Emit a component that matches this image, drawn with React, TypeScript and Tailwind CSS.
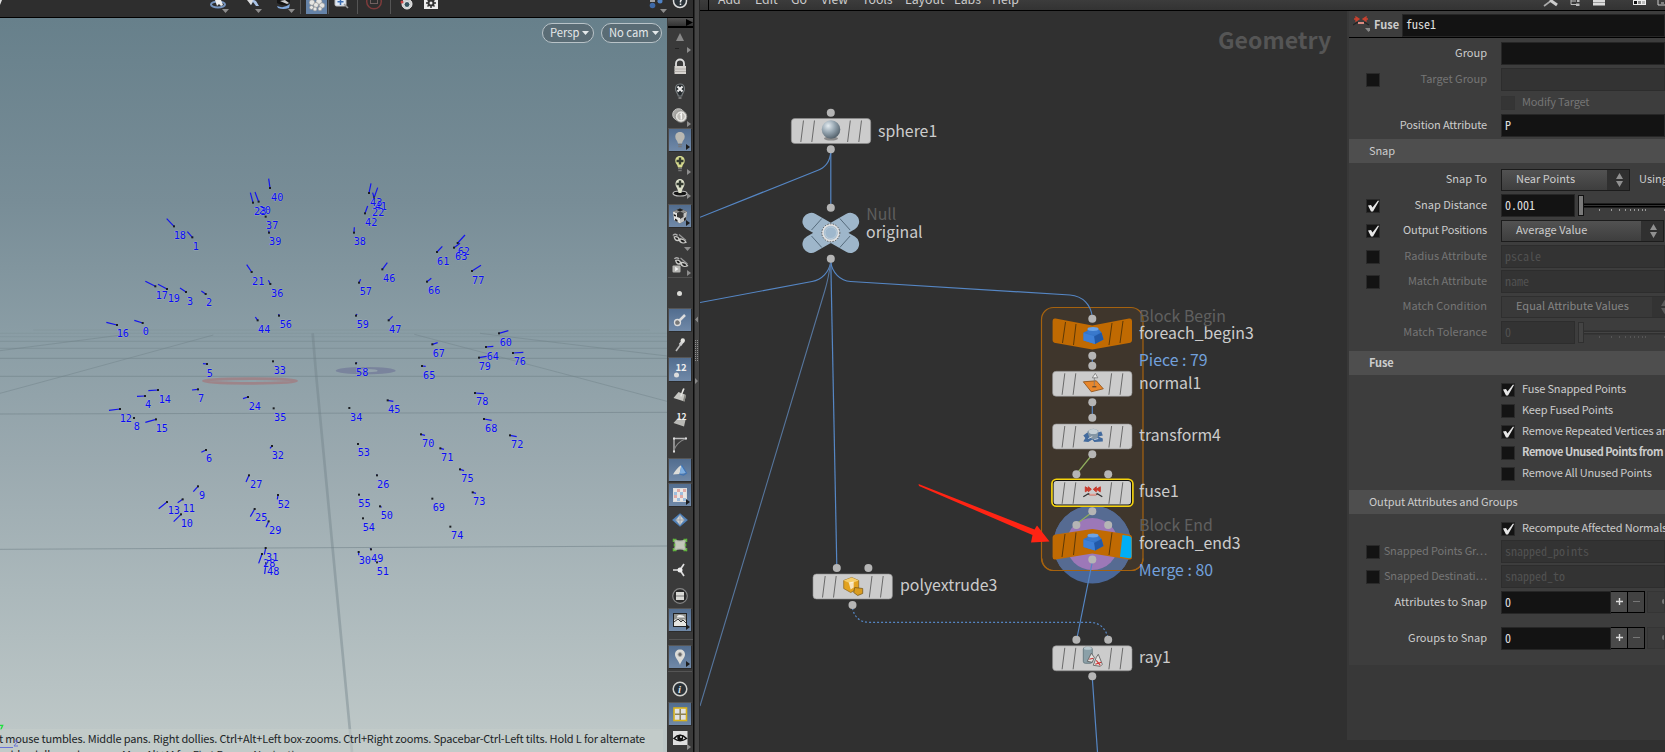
import type { ReactNode } from "react";

const UI = "font-['Noto_Sans_CJK_SC','Noto_Sans',sans-serif]";
const MONO = "font-['Noto_Sans_Mono_CJK_SC','DejaVu_Sans_Mono',monospace]";

/* ---------- 3D viewport ---------- */

type Pt = [string, number, number, number, number, number?, number?];

// label, label x, label centre y, point x, point y, normal tip x, normal tip y
const POINTS: Pt[] = [
  ["40", 815, 593, 810, 564, 806, 536],
  ["20", 778, 632, 776, 605, 765, 576],
  ["23", 764, 635, 759, 608, 751, 578],
  ["37", 800, 677, 797, 650],
  ["39", 809, 725, 807, 698, 806, 692],
  ["18", 523, 707, 522, 679, 500, 656],
  ["1", 580, 740, 577, 712, 562, 695],
  ["21", 758, 845, 755, 816, 740, 794],
  ["36", 815, 881, 811, 852, 805, 841],
  ["17", 469, 887, 466, 859, 436, 844],
  ["19", 505, 895, 501, 867, 474, 853],
  ["3", 563, 905, 558, 876, 540, 864],
  ["2", 620, 908, 617, 882, 604, 873],
  ["16", 352, 1000, 351, 975, 319, 967],
  ["0", 430, 995, 428, 969, 403, 961],
  ["44", 776, 989, 773, 961, 766, 951],
  ["56", 841, 974, 837, 947, 836, 942],
  ["59", 1072, 973, 1068, 947, 1071, 942],
  ["47", 1169, 988, 1166, 961, 1178, 949],
  ["5", 622, 1120, 621, 1092, 609, 1091],
  ["33", 823, 1112, 819, 1084],
  ["58", 1070, 1118, 1068, 1090, 1071, 1087],
  ["41", 1126, 620, 1122, 594, 1133, 563],
  ["43", 1112, 608, 1107, 579, 1113, 550],
  ["22", 1118, 638, 1122, 593, 1118, 578],
  ["42", 1097, 668, 1095, 640, 1103, 618],
  ["38", 1063, 725, 1062, 698, 1063, 682],
  ["46", 1151, 835, 1147, 808, 1162, 788],
  ["57", 1081, 874, 1077, 848, 1082, 838],
  ["61", 1313, 784, 1311, 756, 1327, 739],
  ["62", 1375, 755, 1373, 729, 1395, 705],
  ["63", 1367, 769, 1362, 743, 1380, 730],
  ["77", 1418, 841, 1416, 813, 1443, 796],
  ["66", 1286, 872, 1281, 845, 1294, 835],
  ["67", 1300, 1060, 1297, 1033, 1313, 1028],
  ["60", 1501, 1028, 1497, 1000, 1525, 992],
  ["64", 1462, 1070, 1458, 1041, 1480, 1039],
  ["76", 1543, 1085, 1539, 1059, 1570, 1057],
  ["79", 1438, 1100, 1437, 1073, 1460, 1069],
  ["65", 1271, 1126, 1266, 1098, 1277, 1099],
  ["14", 478, 1199, 474, 1170, 445, 1172],
  ["4", 437, 1214, 435, 1188, 411, 1189],
  ["7", 596, 1196, 594, 1168, 576, 1170],
  ["24", 748, 1220, 744, 1191, 729, 1196],
  ["12", 361, 1256, 360, 1227, 327, 1231],
  ["8", 403, 1280, 402, 1254],
  ["15", 469, 1286, 468, 1258, 436, 1267],
  ["35", 824, 1253, 821, 1225],
  ["34", 1052, 1253, 1048, 1224],
  ["45", 1166, 1229, 1163, 1201, 1180, 1204],
  ["6", 620, 1376, 618, 1350, 604, 1357],
  ["32", 817, 1367, 816, 1338, 810, 1345],
  ["53", 1075, 1358, 1074, 1332],
  ["27", 752, 1454, 747, 1426, 738, 1446],
  ["9", 599, 1487, 594, 1459, 580, 1475],
  ["26", 1133, 1454, 1131, 1426, 1129, 1424],
  ["52", 835, 1514, 834, 1485, 832, 1498],
  ["55", 1077, 1510, 1077, 1484],
  ["50", 1144, 1547, 1140, 1519, 1145, 1522],
  ["13", 505, 1532, 501, 1506, 476, 1526],
  ["11", 550, 1526, 548, 1498, 533, 1508],
  ["10", 544, 1570, 543, 1543, 521, 1565],
  ["25", 767, 1553, 764, 1527, 751, 1550],
  ["29", 809, 1592, 806, 1564, 798, 1582],
  ["54", 1090, 1583, 1089, 1555],
  ["28", 791, 1691, 786, 1662, 776, 1690],
  ["31", 800, 1673, 797, 1644, 793, 1664],
  ["48", 803, 1715, 798, 1690, 794, 1722],
  ["30", 1078, 1681, 1076, 1656, 1076, 1666],
  ["49", 1115, 1675, 1113, 1648, 1110, 1645],
  ["51", 1132, 1715, 1131, 1687],
  ["78", 1430, 1205, 1425, 1179, 1452, 1181],
  ["68", 1457, 1286, 1452, 1257, 1475, 1261],
  ["72", 1535, 1334, 1530, 1306, 1550, 1310],
  ["70", 1268, 1331, 1263, 1303, 1275, 1306],
  ["71", 1325, 1373, 1321, 1345, 1332, 1348],
  ["75", 1386, 1436, 1380, 1408, 1392, 1412],
  ["73", 1421, 1505, 1418, 1477, 1428, 1480],
  ["69", 1300, 1523, 1297, 1496],
  ["74", 1355, 1607, 1351, 1580],
];

function CameraPill({ label, className }: { label: string; className: string }) {
  return (
    <div className={`flex h-[20px] items-center rounded-full border border-[#b9c3c8] bg-[#5a6c75] pl-[7px] text-[11.2px] leading-none text-[#e4e8ea] ${className}`}>
      <span className="-mt-[1px]">{label}</span>
      <svg className="ml-[3px]" width="7" height="4"><path d="M0 0H7L3.500 4Z" fill="#e4e8ea" /></svg>
    </div>
  );
}

function Viewport() {
  return (
    <div className="relative h-full w-[667px] shrink-0 overflow-hidden bg-[linear-gradient(#67808b_0%,#788d97_25%,#8a9da5_43%,#9aa9af_60%,#abb8bb_78%,#bdc7c7_97%)]">
      <svg className="block" width="667" height="734" viewBox="0 54 2001 2202">
        <g stroke="#6f8087" strokeOpacity="0.55" strokeWidth="3" fill="none">
          <path d="M0 1075H2001M0 1129H2001M0 1242L2001 1237M0 1648L2001 1638" />
          <path d="M0 1045H2001M0 1024H2001" strokeOpacity="0.4" />
          <path d="M0 1010H2001M0 1000H2001M100 990H1950" strokeOpacity="0.2" />
          <path d="M0 1180L203 1125L640 1005M0 1052L380 1003M1243 1003L1705 1125L2001 1204M1440 1000L2001 1068" strokeOpacity="0.45" />
          <path d="M938 1000L949 1131L1056 2256" strokeWidth="8" strokeOpacity="0.42" />
        </g>
        <ellipse cx="750" cy="1143" rx="140" ry="7" fill="none" stroke="#a07f84" strokeWidth="8" strokeOpacity="0.85" />
        <ellipse cx="1097" cy="1112" rx="90" ry="11" fill="#6f7496" fillOpacity="0.65" />
        <ellipse cx="1105" cy="1112" rx="28" ry="5" fill="#93a2ab" />
        {POINTS.map(([label, , , px, py, vx, vy]) => (
          <g key={`v${label}${px}`}>
            {vx !== undefined && <path d={`M${px} ${py}L${vx} ${vy}`} stroke="#1414ee" strokeWidth="3.6" />}
            <rect x={px - 3} y={py - 3} width="6" height="6" fill="#1c1e22" />
          </g>
        ))}
        <g className="font-['DejaVu_Sans_Mono',monospace]" fontSize="30.600" fill="#0a0af5" stroke="#b9c6d8" strokeWidth="2.500" strokeOpacity="0.45" paintOrder="stroke">
          {POINTS.map(([label, lx, ly, px]) => (
            <text key={`t${label}${px}`} x={lx - 2} y={ly + 11}>{label}</text>
          ))}
        </g>
        <path d="M0 2176L8 2176L2 2190" stroke="#20e040" strokeWidth="4" fill="none" />
      </svg>
      <div className="absolute top-[5px] right-[5px] flex gap-[7px]">
        <CameraPill label="Persp" className="w-[52px]" />
        <CameraPill label="No cam" className="w-[61px]" />
      </div>
      <div className="absolute bottom-0 left-0 h-[23px] w-[663px] overflow-hidden bg-[#c4cdca]/60">
        <div className="-ml-[24px] w-[800px] pt-px text-[11px] leading-[16px] tracking-[-0.17px] text-[#202426]">
          <p className="pl-[8px] whitespace-nowrap">Left mouse tumbles. Middle pans. Right dollies. Ctrl+Alt+Left box-zooms. Ctrl+Right zooms. Spacebar-Ctrl-Left tilts. Hold L for alternate</p>
          <p className="pl-[14px] whitespace-pre">{"tumble, dolly, and zoom.    M or Alt+M for First Person Navigation."}</p>
        </div>
      </div>
      <svg className="absolute bottom-0 left-0" width="24" height="12"><path d="M0 7.500H13" stroke="#6872d8" strokeWidth="1" /><path d="M14 1H18L14 6H18" stroke="#6872d8" fill="none" /></svg>
    </div>
  );
}

/* ---------- viewport icons (22 x 22) ---------- */

const Plus = ({ y }: { y: number }) => <path d={`M7.500 ${y}H14.500M11 ${y - 3.5}V${y + 3.5}`} stroke="#333a30" strokeWidth="2.400" />;
const Bulb = ({ fill, children }: { fill: string; children?: ReactNode }) => (
  <>
    <path d="M11 3C7.500 3 6.300 5.500 6.300 7.800C6.300 10.800 8.500 11.500 9 14.500H13C13.500 11.500 15.700 10.800 15.700 7.800C15.700 5.500 14.500 3 11 3Z" fill={fill} />
    <path d="M9 15.700H13M9.300 17.700H12.700" stroke="#777" strokeWidth="1.300" />
    {children}
  </>
);
const Glasses = () => (
  <>
    <path d="M4 6.500C5 4.500 7.500 5 8.500 6.500" stroke="#aaa" strokeWidth="1.500" fill="none" />
    <path d="M4.500 7.500C7 6 10 7.500 10.500 9.500C12 8.500 16 10 18 13.500C14 15.500 10.500 14 10 12C7 13 5 11 4.500 7.500Z" fill="#c9c9c6" />
    <path d="M6 8.500C7.500 8 9 9 9.300 10.500C7.500 11 6.500 10 6 8.500ZM11.500 11C13 10.500 15 11.500 16 13C14 14 12 13 11.500 11Z" fill="#1c1c1c" />
    <path d="M10 5.500L17 11.500" stroke="#999" strokeWidth="1.200" />
  </>
);

const ICONS: Record<string, ReactNode> = {
  up: <><path d="M11 3L15 11H7Z" fill="#888" /><path d="M6 18.500H10" stroke="#222" /></>,
  lock: <><path d="M7 10V7.500A4 4 0 0 1 15 7.500V10" stroke="#ddd" strokeWidth="1.800" fill="none" /><rect x="5.500" y="10" width="11.500" height="8" fill="#d6d3cf" /><path d="M5.500 13H17M5.500 15.500H17" stroke="#a9a6a2" strokeWidth=".8" /></>,
  bulbx: <><path d="M11 3C8 3 6.500 5.300 6.500 8C6.500 11 9 12 9.300 15H12.700C13 12 15.500 11 15.500 8C15.500 5.300 14 3 11 3Z" fill="#262b2e" stroke="#777c7e" strokeWidth="1.200" /><path d="M8.500 5.500L13.500 10.500M13.500 5.500L8.500 10.500" stroke="#eee" strokeWidth="2" /><path d="M9.500 17H12.500" stroke="#777" strokeWidth="2" /></>,
  disc: <><circle cx="9.500" cy="9.500" r="5.800" fill="#a9a8a5" stroke="#c9c9c6" /><circle cx="12" cy="11.500" r="5.800" fill="#d3d1cc" stroke="#8e8e8b" strokeWidth=".8" /><circle cx="12" cy="11.500" r="4.300" fill="#bfbdb8" stroke="#efefec" strokeWidth="1" /><path d="M11 10L12.300 9V14.500" stroke="#f4f4f2" strokeWidth="1.400" fill="none" /></>,
  bulb: <Bulb fill="#b9b8b2" />,
  bulbp: <Bulb fill="#d7db8f"><Plus y={8} /></Bulb>,
  bulbg: <><ellipse cx="11" cy="16.500" rx="7" ry="2.500" fill="#151515" stroke="#bbb" strokeWidth="1.200" /><path d="M11 2C8 2 6.500 4.500 6.500 7C6.500 10 9 11 9.500 16H12.500C13 11 15.500 10 15.500 7C15.500 4.500 14 2 11 2Z" fill="#dfe2cc" /><Plus y={7} /></>,
  cube: <><path d="M11 3.500L18 6.500L17 15L11 18.500L5 15L4 6.500Z" fill="#3a3a3a" /><path d="M4 6.500L8 8V12L11 13V18.500L5 15Z" fill="#e4e4e2" /><path d="M11 18.500V14L14.500 12V8.500L18 6.500L17 15Z" fill="#c4c4c2" /><path d="M4 6.500L7.500 5L11 6.500L8 8ZM11 3.500L14.500 5L18 6.500L14.500 8L11 6.500L7.500 5Z" fill="#8f8f8d" /><path d="M4.700 9L7 10V11.500L5 11ZM6 13.500L8.500 15V17L6 15.500ZM15 13.500L17 12L16.800 15L15 16ZM11 3.500L14.500 5L11 6.500L7.500 5Z" fill="#1d1d1d" /></>,
  glasses: <Glasses />,
  glassp: <><g transform="translate(1.500 -1.500)"><Glasses /></g><rect x="3.500" y="11.500" width="8" height="7" rx="1" fill="#b5b5b2" /><path d="M6.200 12.800L9.500 15L6.200 17.200Z" fill="#f4f4f4" /></>,
  dot: <circle cx="10.500" cy="11.500" r="2.500" fill="#dcdcd8" />,
  dotline: <><circle cx="8.500" cy="13.500" r="3" fill="#777" stroke="#ddd" strokeWidth="1.300" /><path d="M10 12L16 6" stroke="#ddd" strokeWidth="2.500" /></>,
  pin: <><path d="M7 17L13.500 8" stroke="#bbb" strokeWidth="1.600" /><path d="M11 11L14 7" stroke="#ccc" strokeWidth="3" /><circle cx="13.800" cy="6.500" r="2.200" fill="#e4e4e0" /></>,
  num: <><circle cx="7.500" cy="16" r="2.500" fill="#ddd" /><text x="6.500" y="12" fontSize="9.500" fontWeight="700" fill="#eee">12</text></>,
  prism: <><path d="M4.500 14L9.500 8L17 11L15.500 17.500Z" fill="#c6c6c2" /><path d="M17 11L15.500 17.500L14 16.500L15.500 11Z" fill="#85857f" /><path d="M11.800 12.500L14.500 5M13.500 8L15 4.500" stroke="#e4e4e0" strokeWidth="1.500" fill="none" /></>,
  prismn: <><path d="M4.500 14L9 9L16.500 11L15 17.500Z" fill="#b9b9b5" /><text x="7.500" y="11" fontSize="8.500" fontWeight="700" fill="#eee">12</text></>,
  curve: <><path d="M5 4.500H17M5 4.500V18" stroke="#bbb" strokeWidth="1.300" /><path d="M5 16C7 11 11 7 16 5" stroke="#888" strokeWidth="1.100" fill="none" /><path d="M4 3.500h2v2h-2zM16 3.500h2v2h-2zM4 16.500h2v2h-2z" fill="#ddd" /></>,
  face: <><path d="M4 15.500C6 12 9 8 12.500 6L10.500 15Z" fill="#dcdcd8" /><path d="M12.500 6L17.500 14L10.500 15Z" fill="#7eaee0" /><path d="M12.500 6L17.500 14L14.500 16L10.500 15" fill="none" stroke="#3f73b3" strokeWidth="1.200" /></>,
  checker: <><rect x="4.500" y="4.500" width="13" height="13" fill="#e9e6e4" stroke="#ddd" /><path d="M8 5h3v3h-3zM14 5h3v3h-3zM5 11h3v3h-3zM11 11h3v3h-3z" fill="#dfaaa6" /><path d="M5 8h3v3h-3zM11 8h3v3h-3zM8 14h3v3h-3zM14 14h3v3h-3z" fill="#9dbede" /></>,
  diamond: <><path d="M11 5L18 11L11 17L4 11Z" fill="#6d8fb5" stroke="#4c7fb9" strokeWidth="1.200" /><path d="M11 6L15 11L11 16L7 11Z" fill="#cfd3d4" /><path d="M11 6V16M7 11H15" stroke="#999" strokeWidth=".8" /></>,
  green: <><path d="M5.500 6Q11 8.500 16.500 6Q14.500 11 16.500 16Q11 13.500 5.500 16Q7.500 11 5.500 6Z" fill="#c3c8bb" stroke="#b9beb2" strokeWidth="1.400" /><path d="M4.500 8V5.500H7.500M14.500 5.500H17.500V8M17.500 14V16.500H14.500M7.500 16.500H4.500V14M5.500 9.500V12.500M16.500 9.500V12.500" stroke="#62b53f" strokeWidth="1.500" fill="none" /></>,
  axes: <><path d="M11 11H4M11 11L15 5M11 11L15 17" stroke="#ddd" strokeWidth="1.700" /><circle cx="11" cy="11" r="2.500" fill="#eee" /></>,
  circle: <><circle cx="11" cy="11" r="7.300" fill="#2b2b2b" stroke="#858585" strokeWidth="1.200" /><rect x="7" y="7" width="8" height="8" fill="#d9d9d5" /><path d="M7 11H15" stroke="#8a8a8a" strokeWidth="1.200" /></>,
  image: <><rect x="4.500" y="4.500" width="13" height="13" fill="#8e908c" stroke="#222" /><path d="M5 11L9 9L12 12L15 10L17 12V17H5Z" fill="#e6e6e2" /><path d="M5 13L9 10L12 13L14 11L17 14" stroke="#333" fill="none" /><path d="M8 7.500C9 5.500 14 5.500 16 8.500H8Z" fill="#eee" /></>,
  marker: <><path d="M11 3.500C8 3.500 6 5.500 6 8.500C6 12 10 15 11 19C12 15 16 12 16 8.500C16 5.500 14 3.500 11 3.500Z" fill="#dcdcd8" /><circle cx="11" cy="8.500" r="2" fill="#666" stroke="#aaa" /></>,
  info: <><circle cx="11" cy="10" r="6.800" fill="#2a3238" stroke="#d2d2ce" strokeWidth="1.500" /><text x="9" y="14" fontSize="11" fontStyle="italic" fontWeight="700" fill="#ddd" fontFamily="Liberation Serif, serif">i</text></>,
  quad: <><rect x="5" y="5" width="12.500" height="12.500" fill="#e2e2e2" stroke="#d7b21c" strokeWidth="1.600" /><path d="M11.200 6V17M6 11.200H17" stroke="#8d8252" strokeWidth="1.500" /></>,
  eye: <><rect x="4" y="3" width="14.500" height="14" fill="#dedede" /><path d="M5 10.500Q11 4 17.500 10.500Q11 15 5 10.500Z" fill="#f4f4f4" stroke="#111" strokeWidth="1.500" /><circle cx="11.200" cy="9.800" r="3" fill="#111" /><circle cx="12" cy="9" r=".9" fill="#fff" /></>,
};

type Tool = { icon: string; cls: string; on?: boolean; arrow?: "right" | "down"; line?: boolean };

const TOOLS: Tool[] = [
  { icon: "up", cls: "h-[26px]", arrow: "right" },
  { icon: "lock", cls: "h-[25px]" },
  { icon: "bulbx", cls: "h-[25px]" },
  { icon: "disc", cls: "h-[24px]", arrow: "right" },
  { icon: "bulb", cls: "h-[24px]", on: true, arrow: "right" },
  { icon: "bulbp", cls: "h-[24px]", arrow: "right" },
  { icon: "bulbg", cls: "h-[24px]", arrow: "right" },
  { icon: "cube", cls: "mt-[4px] h-[24px]", on: true, arrow: "right" },
  { icon: "glasses", cls: "h-[24px]", arrow: "down" },
  { icon: "glassp", cls: "h-[25px]", arrow: "right" },
  { icon: "dot", cls: "h-[31px] border-t border-[#505050]" },
  { icon: "dotline", cls: "h-[24px]", on: true },
  { icon: "pin", cls: "h-[25px]" },
  { icon: "num", cls: "h-[25px]", on: true },
  { icon: "prism", cls: "h-[25px]" },
  { icon: "prismn", cls: "h-[25px]" },
  { icon: "curve", cls: "h-[26px]" },
  { icon: "face", cls: "mb-px h-[24px]", on: true },
  { icon: "checker", cls: "mb-px h-[24px]", on: true, arrow: "right" },
  { icon: "diamond", cls: "h-[24px]" },
  { icon: "green", cls: "h-[25px]" },
  { icon: "axes", cls: "h-[26px]" },
  { icon: "circle", cls: "h-[25px]" },
  { icon: "image", cls: "h-[24px]", on: true, arrow: "right" },
  { icon: "marker", cls: "mt-[13px] h-[24px]", on: true, arrow: "right", line: true },
  { icon: "info", cls: "mt-[9px] h-[24px]", line: true },
  { icon: "quad", cls: "h-[24px]", on: true },
  { icon: "eye", cls: "h-[25px]", arrow: "right" },
];

function ToolStrip() {
  return (
    <div className="flex w-[26px] shrink-0 flex-col bg-[#3a3a3a] pl-px">
      <div className="flex h-[10px] shrink-0 items-center justify-end border-b-2 border-black bg-[linear-gradient(#555,#333)]">
        <svg width="7" height="7"><path d="M0 0L7 3.500L0 7Z" fill="#000" /></svg>
      </div>
      {TOOLS.map((t) => (
        <div key={t.icon} className={`relative flex w-[24px] shrink-0 items-center justify-center ${t.cls} ${t.on ? "border border-[#2c2c2c] border-t-[#565656] border-l-[#4c4c4c] bg-[linear-gradient(#526d8f,#7089a8)]" : ""}`}>
          {t.line && <div className="absolute -top-[7px] left-0 h-px w-[24px] bg-[#555]" />}
          <svg className="shrink-0" width="22" height="22">{ICONS[t.icon]}</svg>
          {t.arrow === "right" && <svg className="absolute right-[1px] bottom-[1px]" width="4" height="6"><path d="M0 0L4 3L0 6Z" fill={t.on ? "#1c1c1c" : "#8d8d8d"} /></svg>}
          {t.arrow === "down" && <svg className="absolute right-[1px] bottom-[1px]" width="7" height="4"><path d="M0 0H7L3.500 4Z" fill="#8d8d8d" /></svg>}
        </div>
      ))}
    </div>
  );
}

function TopBar() {
  return (
    <div className="h-[18px] shrink-0 border-b border-black bg-[#2e2e2e]">
      <svg className="block" width="693" height="17">
        <path d="M0 5L2 0H0Z" fill="#ddd" />
        <ellipse cx="218" cy="4.500" rx="7" ry="3" fill="none" stroke="#7795bf" strokeWidth="2" />
        <path d="M215 0L217 6L219 4L221 6L223 5L221 0Z" fill="#eee" />
        <path d="M248 0L251 5L253 2L256 6L259 6L256 1L254 0Z" fill="#a9c3e6" /><path d="M247 0L251 5L253 0Z" fill="#ddd" />
        <path d="M277 6Q284 9 290 4L289 8Q283 10 278 8Z" fill="#7fa7dc" /><path d="M277 0H290V2L287 5Q282 6 277 3Z" fill="#151515" /><path d="M280 1L285 0L289 3L287 4Z" fill="#ccc" />
        <path d="M222 9H229L225.500 13ZM255 9H262L258.500 13ZM288 9H295L291.500 13ZM660 9H667L663.500 13Z" fill="#8d8d8d" />
        <path d="M300.500 0V14M328.500 0V14M357.500 0V14M390.500 0V14" stroke="#555" />
        <rect x="306" y="0" width="21" height="14" fill="#6583a8" />
        <g fill="#e5e5e2" stroke="#8d8d8d" strokeWidth=".6"><circle cx="312" cy="2.500" r="2.800" /><circle cx="319" cy="1.500" r="3" /><circle cx="311.500" cy="7.500" r="2" /><circle cx="316" cy="5" r="2.500" /><circle cx="322" cy="5.500" r="2.700" /><circle cx="315" cy="9" r="2" /><circle cx="320" cy="8.800" r="2" /></g>
        <rect x="335" y="-4" width="11" height="10" rx="1.500" fill="#dfe9f5" stroke="#bbb" /><path d="M340.500 -1V5M337.500 1.800H343.500" stroke="#3c6fb4" strokeWidth="1.500" /><path d="M344 4L348 8" stroke="#999" strokeWidth="1.600" />
        <circle cx="374" cy="1.500" r="7.300" fill="none" stroke="#7c3b3b" strokeWidth="1.500" /><rect x="370.500" y="-1" width="7" height="4.500" fill="none" stroke="#71605f" />
        <circle cx="407" cy="4" r="5" fill="#ccc" stroke="#eee" /><circle cx="407" cy="4.500" r="3" fill="#35535e" stroke="#eee" /><circle cx="402" cy="2" r="1.500" fill="#c44" />
        <rect x="424" y="-3" width="14" height="12" fill="#eee" /><circle cx="431" cy="3" r="3.500" fill="#333" /><path d="M431 -2V8M426 3H436M427.500 -.5L434.500 6.500M434.500 -.5L427.500 6.500" stroke="#333" strokeWidth="1.500" /><circle cx="431" cy="3" r="1.500" fill="#eee" />
        <path d="M650 1H655M658 2L661 0" stroke="#ccc" strokeWidth="1.500" /><circle cx="652.500" cy="5.500" r="2.800" fill="#3d69a8" /><circle cx="660" cy="1" r="2.500" fill="#4f82c4" />
        <circle cx="680" cy="1" r="6.500" fill="#2a3238" stroke="#ddd" strokeWidth="1.500" /><path d="M678 -1Q678 -3.500 680.500 -3.500Q683 -2 680.500 1V2.500M680.500 3.500V5" stroke="#eee" strokeWidth="1.500" fill="none" />
      </svg>
    </div>
  );
}

/* ---------- network editor ---------- */

function Pin({ x, y }: { x: number; y: number }) {
  return <circle cx={x} cy={y} r="4" fill="#b5b5b5" />;
}

function Slots({ x, y, stroke = "#6a6a6a" }: { x: number; y: number; stroke?: string }) {
  return <path transform={`translate(${x} ${y})`} d="M12.200 2L9.500 23.500M23.200 2L20.500 23.500M59 2L56.300 23.500M70.200 2L67.500 23.500" stroke={stroke} strokeWidth="1" />;
}

function NodeBody({ x, y, children }: { x: number; y: number; children?: ReactNode }) {
  return (
    <g>
      <rect x={x} y={y} width="79.400" height="25" rx="3.500" fill="#cccccc" stroke="#8f8f8f" strokeWidth=".6" />
      <Slots x={x} y={y} />
      <g transform={`translate(${x + 39.7} ${y + 12.5})`}>{children}</g>
    </g>
  );
}

const Brick = () => (
  <>
    <path d="M-9.500 -3L-5 -5L6 -6L8.500 -3L10.500 4L2 8.500L-9.500 5Z" fill="#3474c8" />
    <path d="M1 1L8.500 -3L10.500 4L2 8.500Z" fill="#2259a8" />
    <path d="M-9.500 -2.500L1 0.500L2 8.500L-9.500 5Z" fill="#3f80d6" />
    <path d="M-5.500 -6.500Q0 -9.500 5.500 -6.500V-2Q0 0.500 -5.500 -2Z" fill="#3a79cc" /><ellipse cx="0" cy="-6.500" rx="5.500" ry="1.900" fill="#6ba3e6" />
  </>
);

const LABELS: [string, number, number, string][] = [
  ["sphere1", 878, 136.500, "#cccccc"],
  ["Null", 866.300, 219.800, "#5e5e5e"],
  ["original", 866.100, 237.500, "#cccccc"],
  ["polyextrude3", 900, 591.400, "#cccccc"],
  ["Block Begin", 1139, 321.800, "#606060"],
  ["foreach_begin3", 1139, 339.400, "#cccccc"],
  ["Piece : 79", 1138.800, 366.200, "#72a0dc"],
  ["normal1", 1139, 389.400, "#cccccc"],
  ["transform4", 1139, 441.400, "#cccccc"],
  ["fuse1", 1139, 497.400, "#cccccc"],
  ["Block End", 1139, 531, "#606060"],
  ["foreach_end3", 1139, 549.400, "#cccccc"],
  ["Merge : 80", 1138.800, 576.200, "#72a0dc"],
  ["ray1", 1139, 663.400, "#cccccc"],
];

function Network() {
  return (
    <svg className="block shrink-0 bg-[#303030]" width="647" height="741" viewBox="700 11 647 741">
      <text x="1218" y="49" fontSize="23.100" fontWeight="700" fill="#555555">Geometry</text>
      <rect x="1041.500" y="307.500" width="101.500" height="263" rx="12" fill="#3f362c" stroke="#a5620f" strokeWidth="1.200" />
      <circle cx="1092.300" cy="544.500" r="39" fill="#4a6798" />
      <path d="M1053.300 544.500A39 39 0 0 1 1131.300 544.500V570H1053.300Z" fill="#566b92" clipPath="url(#halo)" />
      <clipPath id="halo"><circle cx="1092.300" cy="544.500" r="39" /></clipPath>
      <circle cx="1092.300" cy="544" r="26" fill="#9c78b8" />
      <path d="M1042 558.500A12 12 0 0 0 1053.500 570.500H1131A12 12 0 0 0 1143 558.500" fill="none" stroke="#a5620f" strokeWidth="1.200" />
      <g stroke="#5586c4" strokeWidth="1.200" fill="none">
        <path d="M830.800 152C830 162 825 168 816.700 170.700L700 217.300" />
        <path d="M830.800 152V206" />
        <path d="M830.800 262C829 272 822 280 812 281.500L700 302.500" />
        <path d="M830.800 262C832 272 840 281 850.600 281.500L1070 295C1083 296 1091 305 1092.300 317" />
        <path d="M830.800 262L836.800 566" />
        <path d="M830.800 262C829 274 828 280 825 290L700 706" stroke="#56759c" strokeWidth="1.100" />
        <path d="M1092.300 357V365M1092.300 403V417M1092.300 562L1077 638M1092.300 678L1097.500 752" />
        <path d="M852.500 608C854 617 860 622.300 869 622.300H1090C1100 622.500 1106 629 1108 638" strokeDasharray="2 2" />
      </g>
      <path d="M1092.300 454.500L1076.500 474M1092.300 512L1076.500 524" stroke="#8fae5d" strokeWidth="1.200" />

      <NodeBody x={791.300} y={118.500}>
        <defs><radialGradient id="ball" cx=".35" cy=".3" r=".8"><stop offset="0" stopColor="#e4ecf1" /><stop offset=".45" stopColor="#96a6b1" /><stop offset="1" stopColor="#47545e" /></radialGradient></defs>
        <ellipse cx="0" cy="7.500" rx="7" ry="2" fill="#8a8a8a" /><circle cx="0" cy="-1.500" r="9.300" fill="url(#ball)" />
      </NodeBody>
      <Pin x={830.800} y={112.700} /><Pin x={830.800} y={149.300} />

      <path d="M811.200 221.600L850.400 244.200M850.400 221.600L811.200 244.200" stroke="#9eb6ca" strokeWidth="17.500" strokeLinecap="round" />
      <path d="M811.500 230L821.800 218.500M850.100 230L839.800 218.500M811.500 236L821.800 247.500M850.100 236L839.800 247.500" stroke="#566b7c" strokeWidth="1" />
      <circle cx="830.800" cy="232.800" r="8" fill="#a3bbcf" stroke="#e0e0e0" strokeWidth="2" /><circle cx="830.800" cy="232.800" r="9" fill="none" stroke="#555" strokeWidth="1" strokeDasharray="1.300 1.460" /><circle cx="830.800" cy="232.800" r="5.800" fill="#9fb8cd" stroke="#bfcfdb" strokeWidth=".8" />
      <Pin x={830.800} y={207.700} /><Pin x={830.800} y={258.700} />

      <NodeBody x={813} y={574}>
        <path d="M-9 -6L-1 -9L6 -6V2L-2 6L-9 2Z" fill="#e2a21f" stroke="#8b6419" strokeWidth=".7" /><path d="M-9 -6L-2 -3L6 -6L-1 -9Z" fill="#f4cd6b" /><path d="M-4 -4L1 -5V1L-2 3Z" fill="#fff" opacity=".7" /><path d="M2 1L10 2V7L5 9L1 6Z" fill="#d99c20" stroke="#6f5014" strokeWidth=".7" />
      </NodeBody>
      <Pin x={836.800} y={568} /><Pin x={868.400} y={568} /><Pin x={852.500} y={605} />

      <path d="M1055.600 318.500L1092.300 325.500L1129 318.500Q1132 318 1132 321.500V340Q1132 342.500 1129 343L1092.300 349.500L1055.600 343Q1052.600 342.500 1052.600 340V321.500Q1052.600 318 1055.600 318.500Z" fill="#c06a02" />
      <path d="M1065.500 322L1062.500 343M1076 324L1073.500 345M1112 323L1109 345M1123 321L1120 343" stroke="#5e3906" />
      <g transform="translate(1093 335.500)"><Brick /></g>
      <Pin x={1092.300} y={318.700} /><Pin x={1092.300} y={355.700} />

      <NodeBody x={1052.600} y={371.300}>
        <path d="M-9 -2L4 -3L11 5L-1 8Z" fill="#e8872c" stroke="#8c4c12" strokeWidth=".8" /><path d="M2 2V-6M0 -6L3 -10.500L5.500 -6Z" fill="#f0f0f0" stroke="#777" strokeWidth=".8" /><path d="M0 3H4" stroke="#333" />
      </NodeBody>
      <Pin x={1092.300} y={365.700} /><Pin x={1092.300} y={402.300} />

      <NodeBody x={1052.600} y={424}>
        <path d="M-9 -1L-5 -4L2 -3L9 -5L10.500 -1L6 0L10.500 2V5L2 5.500L0 3L-4 5.500L-9 5L-7 1.500Z" fill="#436b9e" />
        <path d="M-5 -5Q0 -10 6 -6L5.500 1L1 3L-3 1Z" fill="#8496a4" /><ellipse cx="1" cy="-5" rx="4.500" ry="2.600" fill="#c6d0d6" />
        <path d="M-4 2L0 0M2 3L6 2" stroke="#d6dce2" />
      </NodeBody>
      <Pin x={1092.300} y={417.700} /><Pin x={1092.300} y={454.300} />

      <NodeBody x={1052.600} y={480.300}>
        <path d="M-7 -6L-3 -3.500L-7 -1ZM-1 -3.500L-4 -6V-1ZM8 -6L4 -3.500L8 -1ZM1 -3.500L4 -6V-1Z" fill="#c93a2c" stroke="#c93a2c" /><path d="M-9 4L-4 1L-2 2H3L5 1L10 4" stroke="#333" strokeWidth="1.300" fill="none" /><path d="M-3 2H4" stroke="#e09a90" strokeWidth="2" />
      </NodeBody>
      <rect x="1053" y="480.500" width="78.600" height="24.500" rx="3.500" fill="none" stroke="#111" strokeWidth="1.200" />
      <rect x="1051.900" y="479.300" width="81" height="27" rx="4.500" fill="none" stroke="#f7d40c" strokeWidth="1.600" />
      <Pin x={1076.400} y={474.300} /><Pin x={1108.200} y={474.300} /><Pin x={1092.300} y={511.200} />

      <path d="M1055.600 534.500L1092.300 529L1129 534.500Q1132 535 1132 537.500V557Q1132 560 1129 559.400L1092.300 553.500L1055.600 559.400Q1052.600 560 1052.600 557V537.500Q1052.600 535 1055.600 534.500Z" fill="#c06a02" />
      <path d="M1122.500 535L1129 536Q1131.500 536.500 1131.500 538.500V556.500Q1131.500 558.500 1129 558.200L1120 556.800Z" fill="#00aef5" />
      <path d="M1065 534L1062 557M1076 532.500L1073.500 555M1112 532.500L1109 555" stroke="#5e3906" />
      <g transform="translate(1093 542)"><Brick /></g>
      <Pin x={1076.400} y={525} /><Pin x={1108.200} y={525} /><Pin x={1092.300} y={559.500} />

      <NodeBody x={1052.600} y={645.800}>
        <rect x="-9" y="-11" width="9" height="16" rx="2" fill="#8ba0a8" stroke="#5d7078" strokeWidth=".8" /><ellipse cx="-4.500" cy="-10" rx="4" ry="1.500" fill="#b9c9cf" /><path d="M-5 3L-1 -5L2 -1L0 4ZM1 7L4 -1L6 -4L10 6L8 8Z" fill="#e2e2e0" stroke="#555" strokeWidth=".8" /><path d="M-3 1L1 0M3 6L9 4M4 2L8 7" stroke="#c33" strokeWidth="1.100" />
      </NodeBody>
      <Pin x={1076.400} y={639.800} /><Pin x={1108.200} y={639.800} /><Pin x={1092.300} y={676.300} />

      {LABELS.map(([text, x, y, fill]) => (
        <text key={text} x={x} y={y} fontSize="15.850" fill={fill}>{text}</text>
      ))}
      <path d="M918.500 484L1034.500 529.500L1037 525.500L1049.500 541.500L1031 542.500L1032.500 535L919 486Z" fill="#ff2414" />
    </svg>
  );
}

/* ---------- parameter pane ---------- */

function Check({ on, dim, className = "" }: { on?: boolean; dim?: boolean; className?: string }) {
  return (
    <div className={`h-[14px] w-[14px] shrink-0 border ${dim ? "border-[#343434] bg-[#353535]" : "border-[#2a2a2a] bg-[#131313]"} ${className}`}>
      {on && <svg className="block" width="12" height="12"><path d="M1 5.500L4 5L5.500 7.500L11 0.500L12 1L6 11.500H4Z" fill="#e6e6e6" /></svg>}
    </div>
  );
}

function Row({ cls, label, dim, tight, check, children }: { cls: string; label?: string; dim?: boolean; tight?: boolean; check?: "on" | "off"; children?: ReactNode }) {
  return (
    <div className={`flex w-[316px] shrink-0 items-center ${cls}`}>
      <div className="flex w-[32px] shrink-0 justify-end">{check && <Check on={check === "on"} className="mr-[1px]" />}</div>
      <div className={`w-[106px] shrink-0 pb-[2px] text-right whitespace-nowrap ${dim ? "text-[#757575]" : "text-[#cccccc]"} ${tight ? "tracking-[-0.15px]" : ""}`}>{label}</div>
      <div className="ml-[14px] flex h-full min-w-0 flex-1 items-center overflow-hidden">{children}</div>
    </div>
  );
}

function Field({ value = "", dim, cls = "flex-1" }: { value?: string; dim?: boolean; cls?: string }) {
  return (
    <div className={`flex h-full items-center border pl-[3px] text-[12px] leading-none whitespace-nowrap ${MONO} ${dim ? "border-[#2d2d2d] bg-[#333333] text-[#515151]" : "border-[#262626] bg-[#131313] text-[#e0e0e0]"} ${cls}`}>
      <span className="-mt-[2px]">{value}</span>
    </div>
  );
}

function Select({ value, cls, dim }: { value: string; cls: string; dim?: boolean }) {
  return (
    <div className={`flex h-[22px] shrink-0 items-center border ${dim ? "border-[#2f2f2f] bg-[#393939] text-[#858585]" : "border-[#1c1c1c] bg-[linear-gradient(#525252,#3e3e3e)] text-[#cccccc]"} ${cls}`}>
      <span className="flex-1 pb-[2px] pl-[14px] whitespace-nowrap">{value}</span>
      <div className={`flex h-full w-[22px] items-center justify-center pl-[2px] ${dim ? "bg-[#333]" : "bg-[#303030]"}`}>
        <svg width="7" height="14"><path d="M3.500 0L7 6H0ZM3.500 14L0 8H7Z" fill={dim ? "#5a5a5a" : "#909090"} /></svg>
      </div>
    </div>
  );
}

function Slider({ dim }: { dim?: boolean }) {
  return (
    <svg className="ml-[3px] shrink-0" width="87" height="22">
      <path d="M5 10.500H87" stroke={dim ? "#303030" : "#000"} strokeWidth="4" />
      <path d="M5 10.500H87" stroke={dim ? "#444" : "#333"} strokeWidth="1" />
      <path d="M21.500 14v2M33.500 14v2M41.500 14v2M47.500 14v2M52.500 14v2M56.500 14v2M60.500 14v2M64.500 14v2M67.500 14v2M86.500 14v2" stroke={dim ? "#565656" : "#999"} />
      <rect x=".5" y=".5" width="5" height="20" fill={dim ? "#444" : "#7a7a7a"} stroke={dim ? "#303030" : "#111"} />
    </svg>
  );
}

function Toggle({ cls, label, on, dim, bold }: { cls: string; label: string; on?: boolean; dim?: boolean; bold?: boolean }) {
  return (
    <Row cls={cls}>
      <Check on={on} dim={dim} />
      <span className={`-mt-[1px] ml-[7px] pb-[2px] whitespace-nowrap ${dim ? "text-[#757575]" : "text-[#cccccc]"} ${bold ? "font-bold tracking-[-0.48px]" : "tracking-[-0.16px]"}`}>{label}</span>
    </Row>
  );
}

function Heading({ cls, children }: { cls: string; children: ReactNode }) {
  return <div className={`flex h-[24px] w-[316px] shrink-0 items-center bg-[#4e4e4e] pb-[2px] pl-[20px] text-[#cccccc] ${cls}`}><span className="tracking-[-0.1px]">{children}</span></div>;
}

function Counter() {
  return (
    <>
      <Field value="0" cls="w-[110px] shrink-0" />
      <div className="mb-[2px] flex h-[22px] shrink-0 border border-l-0 border-black">
        <div className="flex w-[17px] items-center justify-center border-r border-black bg-[#4a4a4a]"><svg width="7" height="7"><path d="M0 3.500H7M3.500 0V7" stroke="#ddd" strokeWidth="1.400" /></svg></div>
        <div className="flex w-[16px] items-center justify-center bg-[#424242]"><svg width="7" height="7"><path d="M0 3.500H7" stroke="#777" /></svg></div>
      </div>
      <div className="mb-[2px] ml-[2px] flex h-[22px] flex-1 items-center justify-end border border-[#353535] bg-[#3b3b3b]"><div className="h-[5px] w-[2px] rounded-l bg-[#777]" /></div>
    </>
  );
}

function Params() {
  return (
    <div className="flex w-[318px] shrink-0 flex-col bg-[#303030] text-[11px] leading-none">
      <div className="flex h-[729px] w-full flex-col bg-[#383838] pl-[2px]">
        <div className="flex h-[654px] shrink-0 flex-col bg-[#3d3d3d]">
          <div className="flex h-[27px] shrink-0 items-center border-b border-black">
            <svg className="ml-[4px]" width="17" height="20"><path d="M1 5H5M3 3L6 5L3 7ZM15 5H11M13 3L10 5L13 7Z" stroke="#c8412f" strokeWidth="1.300" fill="#c8412f" /><path d="M0 11L4 8.500H12L16 11" stroke="#222" strokeWidth="1.200" fill="none" /><path d="M5 9H11" stroke="#dc8a80" strokeWidth="2" /><path d="M12 14H19L15.500 18Z" fill="#888" /></svg>
            <span className="ml-[4px] w-[28px] pt-[1px] font-bold text-[#cccccc]">Fuse</span>
            <div className="mt-[2px] h-[23px] flex-1"><Field value="fuse1" cls="w-full" /></div>
          </div>
          <Row cls="mt-[4px] h-[23px]" label="Group"><Field /></Row>
          <Row cls="mt-[3px] h-[23px]" label="Target Group" dim check="off"><Field dim /></Row>
          <Toggle cls="mt-[5px] h-[14px]" label="Modify Target" dim />
          <Row cls="mt-[4px] h-[23px]" label="Position Attribute" tight><Field value="P" /></Row>
          <Heading cls="mt-[2px]">Snap</Heading>
          <Row cls="mt-[5px] h-[23px]" label="Snap To"><Select value="Near Points" cls="w-[129px]" /><span className="ml-[9px] pb-[2px] text-[#cccccc]">Using</span></Row>
          <Row cls="mt-[3px] h-[23px]" label="Snap Distance" check="on"><Field value="0.001" cls="w-[74px] shrink-0" /><Slider /></Row>
          <Row cls="mt-[2px] h-[23px]" label="Output Positions" tight check="on"><Select value="Average Value" cls="w-[163px]" /></Row>
          <Row cls="mt-[3px] h-[23px]" label="Radius Attribute" dim check="off"><Field value="pscale" dim /></Row>
          <Row cls="mt-[2px] h-[23px]" label="Match Attribute" dim check="off"><Field value="name" dim /></Row>
          <Row cls="mt-[2px] h-[23px]" label="Match Condition" dim><Select value="Equal Attribute Values" cls="w-[174px]" dim /></Row>
          <Row cls="mt-[3px] h-[23px]" label="Match Tolerance" dim><Field value="0" dim cls="w-[74px] shrink-0" /><Slider dim /></Row>
          <Heading cls="mt-[7px]"><b>Fuse</b></Heading>
          <Toggle cls="mt-[8px] h-[14px]" label="Fuse Snapped Points" on />
          <Toggle cls="mt-[7px] h-[14px]" label="Keep Fused Points" />
          <Toggle cls="mt-[7px] h-[14px]" label="Remove Repeated Vertices and" on />
          <Toggle cls="mt-[7px] h-[14px]" label="Remove Unused Points from Poly" bold />
          <Toggle cls="mt-[7px] h-[14px]" label="Remove All Unused Points" />
          <Heading cls="mt-[9px]">Output Attributes and Groups</Heading>
          <Toggle cls="mt-[8px] h-[14px]" label="Recompute Affected Normals" on />
          <Row cls="mt-[4px] h-[23px]" label="Snapped Points Gr…" dim tight check="off"><Field value="snapped_points" dim /></Row>
          <Row cls="mt-[2px] h-[23px]" label="Snapped Destinati…" dim tight check="off"><Field value="snapped_to" dim /></Row>
          <Row cls="mt-[3px] h-[23px]" label="Attributes to Snap"><Counter /></Row>
          <Row cls="mt-[13px] h-[23px]" label="Groups to Snap"><Counter /></Row>
        </div>
      </div>
    </div>
  );
}

function MenuBar() {
  return (
    <div className="flex h-[11px] shrink-0 overflow-hidden border-b border-black bg-[linear-gradient(#3c3c3c,#333)]">
      <div className="h-full w-[9px] shrink-0 border-r border-black" />
      <div className="-mt-[10px] flex h-[20px] w-[620px] shrink-0 text-[12.300px] leading-[18px] text-[#cccccc]">
        <span className="w-[37px] pl-[9px]">Add</span>
        <span className="w-[36px] pl-[9px]">Edit</span>
        <span className="w-[30px] pl-[9px]">Go</span>
        <span className="w-[41px] pl-[9px]">View</span>
        <span className="w-[43px] pl-[9px]">Tools</span>
        <span className="w-[49px] pl-[9px]">Layout</span>
        <span className="w-[38px] pl-[9px]">Labs</span>
        <span className="w-[40px] pl-[9px]">Help</span>
      </div>
      <svg className="ml-auto shrink-0" width="125" height="10">
        <path d="M4 6L12 0" stroke="#aaa" strokeWidth="1.600" /><path d="M10 0L17 5" stroke="#ccc" strokeWidth="3" /><path d="M31 0V4.500H36M31 1H36" stroke="#bbb" fill="none" /><path d="M37 0h2.500v2h-2.500zM36 3.500h3.500v2.500h-3.500z" fill="#bbb" />
        <rect x="53" y="0" width="12" height="5.500" fill="#ddd" /><path d="M53 2.500H65" stroke="#999" />
        <rect x="93" y="0" width="13" height="5" fill="#eee" /><path d="M94 1h3v3h-3z" fill="#111" /><path d="M98 1h3v3h-3z" fill="#888" /><path d="M102 1h3v3h-3z" fill="#bbb" /><path d="M118 0V5H125M121 3H124" stroke="#ccc" fill="none" />
      </svg>
    </div>
  );
}

export default function App() {
  return (
    <div className={`flex h-[752px] w-[1665px] overflow-hidden bg-[#303030] ${UI}`}>
      <div className="flex w-[693px] shrink-0 flex-col overflow-hidden">
        <TopBar />
        <div className="flex h-[734px]">
          <Viewport />
          <ToolStrip />
        </div>
      </div>
      <svg className="block shrink-0" width="7" height="752">
        <path d="M0 0H7V752H0Z" fill="#0c0c0c" /><path d="M1.500 0H6V752H1.500Z" fill="#454545" /><path d="M6 0H7V752H6Z" fill="#262626" />
        <path d="M5 316.500V322.500L2 319.500ZM2 378V384L5 381Z" fill="#8a8a8a" />
        <path d="M2.500 340V361M4.500 340V361" stroke="#909090" strokeDasharray="1 1" />
      </svg>
      <div className="flex w-[965px] shrink-0 flex-col">
        <MenuBar />
        <div className="flex h-[741px]">
          <Network />
          <Params />
        </div>
      </div>
    </div>
  );
}
